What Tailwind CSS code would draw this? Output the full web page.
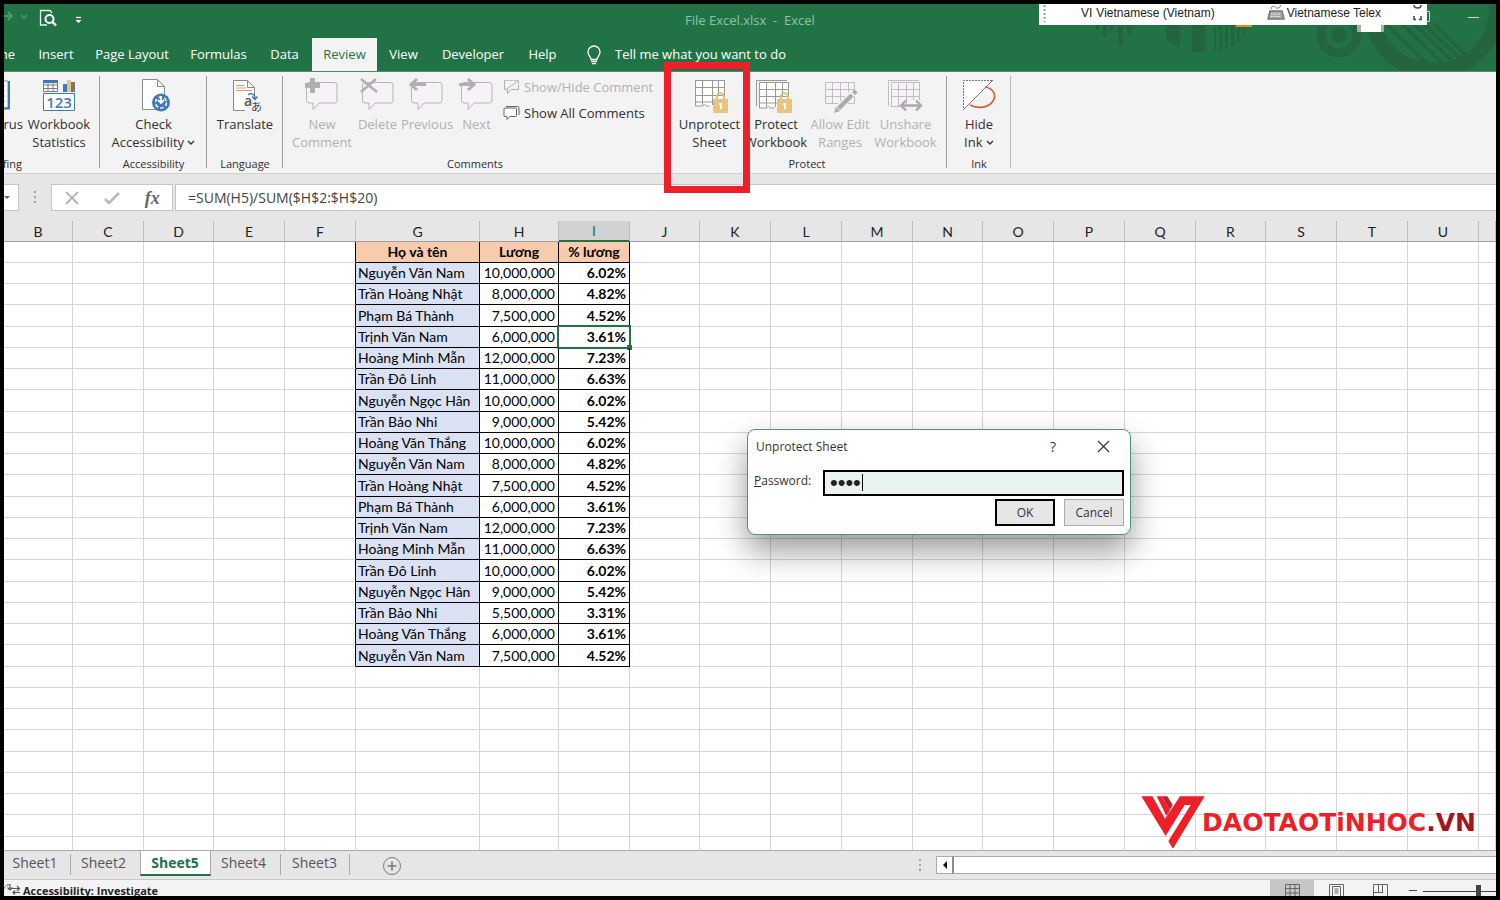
<!DOCTYPE html>
<html lang="vi">
<head>
<meta charset="utf-8">
<title>File Excel.xlsx - Excel</title>
<script src="https://cdn.jsdelivr.net/npm/@tailwindcss/browser@4"></script>
</head>
<body>
<div class="relative flex h-screen flex-col overflow-hidden border-4 border-black bg-[#e6e6e6] font-['Open_Sans','Noto_Sans',sans-serif] text-[13px] text-[#262626]">

  <!-- Title bar and ribbon tabs -->
  <header class="relative flex h-[68px] shrink-0 flex-col overflow-hidden border-b border-[#4c8e69] bg-[#217346] text-white">
    <svg class="absolute top-0 right-0" width="410" height="68" viewBox="0 0 410 68" fill="#24653f">
      <path d="M10 20h3v6h-3zM17 20h4v13h-4zM24 20h3v7h-3zM32 20h5v22h-5zM41 20h5v10h-5zM80 20h14v24l-14-8zM106 20h13v28h-13zM128 20h2v27h-2zM133 20h3v26h-3zM139 20h3v24h-3zM145 20h3v22h-3zM151 20h3v18h-3zM157 20h2v12h-2z"/>
      <circle cx="253" cy="31" r="18" fill="none" stroke="#24653f" stroke-width="9"/><circle cx="253" cy="31" r="8"/>
      <clipPath id="disc"><circle cx="348" cy="4" r="56"/></clipPath>
      <circle cx="348" cy="4" r="63" fill="none" stroke="#24653f" stroke-width="16"/>
      <path clip-path="url(#disc)" d="M300 20l50 48M316 20l50 48M328 20l50 48M338 20l50 48M348 20l50 48" fill="none" stroke="#24653f" stroke-width="4"/>
    </svg>
    <div class="relative grid h-[34px] grid-cols-[1fr_auto_1fr] items-center">
      <div class="flex h-full items-center">
        <svg width="90" height="34" viewBox="0 0 90 34" fill="none">
          <path d="M-4 12H8M4 8l4 4-4 4" stroke="#4f9a70" stroke-width="2"/>
          <path d="M17 11l3 3 3-3" stroke="#4f9a70" stroke-width="1.3"/>
          <path d="M43 21H36.500V6.500H46L48 9" stroke="#e8f2ec" stroke-width="1.300"/>
          <circle cx="45.500" cy="15" r="4" stroke="#fff" stroke-width="2"/><path d="M48.500 18l3.500 3.500" stroke="#fff" stroke-width="2.400"/>
          <path d="M72 13.500h5" stroke="#fff" stroke-width="1.300"/><path d="M71.500 16h6l-3 3z" fill="#fff"/>
        </svg>
      </div>
      <h1 class="pb-[3px] text-[13px] leading-4 whitespace-pre text-[#8fc3a6]">File Excel.xlsx  -  Excel</h1>
      <div class="flex justify-end pb-2">
        <button aria-label="Minimize" class="mr-[17px] h-3 w-[11px]"><span class="block h-px bg-[#c5dccf]"></span></button>
      </div>
    </div>
    <nav class="relative flex h-[34px] text-[13px]">
      <button class="flex w-6 items-center justify-end overflow-hidden pr-[13px]">Home</button>
      <button class="w-14">Insert</button>
      <button class="w-24">Page Layout</button>
      <button class="w-[77px]">Formulas</button>
      <button class="w-[55px]">Data</button>
      <button class="w-[65px] bg-[#f3f3f3] text-[#217346]">Review</button>
      <button class="w-[53px]">View</button>
      <button class="w-[86px]">Developer</button>
      <button class="w-[53px]">Help</button>
      <button class="ml-4 flex items-center gap-3">
        <svg width="18" height="20" viewBox="0 0 18 20" fill="none" stroke="#fff" stroke-width="1.300"><path d="M6 14.500c0-3-3-3.500-3-7.500a6 6 0 0 1 12 0c0 4-3 4.500-3 7.500zM6 16.500h6M7 18.700h4"/></svg>
        Tell me what you want to do
      </button>
    </nav>
  </header>

  <!-- Ribbon -->
  <section class="flex h-[102px] shrink-0 border-b border-[#d2d2d2] bg-[#f3f3f3] pt-1 pb-px text-center leading-[18px] text-[#303030]">
    <div class="relative flex w-24 flex-col justify-between">
      <div class="flex">
        <button class="flex w-[19px] flex-col items-end overflow-hidden">
          <svg width="19" height="39" viewBox="0 0 19 39" fill="none"><path d="M-2 5H4V32H-2" fill="#fff" stroke="#8a8a8a"/><path d="M-2 10H1M-2 15H1M-2 20H1M-2 25H1" stroke="#8a8a8a"/><path d="M5 5V32.500H-2" stroke="#3b78b8" stroke-width="2"/></svg>
          <span>Thesaurus</span>
        </button>
        <button class="flex w-[72px] flex-col items-center">
          <svg width="36" height="39" viewBox="0 0 36 39" fill="none">
            <path d="M2.500 4.500h14v11h-14zM2.500 9h14M2.500 12.500h14M7 6v10M12 6v10" stroke="#7d7d7d" fill="#fff"/><path d="M2 4h15v3H2z" fill="#3f7ab8"/>
            <path d="M22 8h4v8h-4z" fill="#3f7ab8"/><path d="M26 4h4v12h-4z" fill="#eac282"/><path d="M30 6h4v10h-4z" fill="#777"/>
            <path d="M2.500 17.500h31v17h-31z" fill="#fff" stroke="#3f7ab8"/>
            <text x="18" y="31.500" text-anchor="middle" font-family="Open Sans" font-size="15" font-weight="600" fill="#3f7ab8">123</text>
          </svg>
          <span>Workbook<br>Statistics</span>
        </button>
      </div>
      <div class="flex w-[18px] justify-end overflow-hidden text-[11px] leading-4">Proofing</div>
      <span class="absolute inset-y-0 right-0 mb-1 w-px bg-[#9c9c9c]"></span>
    </div>
    <div class="relative flex w-[107px] flex-col justify-between">
      <button class="flex flex-col items-center">
        <svg width="40" height="39" viewBox="0 0 40 39" fill="none">
          <path d="M8.500 3.500h15l7 7v23h-22zM23.500 3.500v7h7" fill="#fff" stroke="#8a8a8a"/>
          <circle cx="27" cy="26.500" r="9" fill="#3f7ab8"/><circle cx="27" cy="26.500" r="5.500" stroke="#fff" stroke-width="1.600" stroke-dasharray="3.500 2.200"/><path d="M27 20v6M24 24l3 3 3-3" stroke="#fff" stroke-width="1.800"/>
        </svg>
        <span>Check<br>Accessibility <svg class="inline" width="8" height="8" viewBox="0 0 8 8" fill="none" stroke="#333" stroke-width="1.400"><path d="M1 1l3 3 3-3"/></svg></span>
      </button>
      <div class="text-[11px] leading-4">Accessibility</div>
      <span class="absolute inset-y-0 right-0 mb-1 w-px bg-[#9c9c9c]"></span>
    </div>
    <div class="relative flex w-[76px] flex-col justify-between">
      <button class="flex flex-col items-center">
        <svg width="40" height="39" viewBox="0 0 40 39" fill="none">
          <path d="M8.500 4.500h14l7 7v23h-21zM22.500 4.500v7h7" fill="#fff" stroke="#8a8a8a"/>
          <path d="M11 9.500h8M11 12h10M11 14.500h16" stroke="#e59a5c" stroke-width="1.200"/><path d="M20 23h17v13H20z" fill="#f3f3f3"/>
          <path d="M23 19c3-2.500 7-1 7 3M27 20.500l3 3 2.500-3" stroke="#3f7ab8" stroke-width="1.400"/>
          <text x="19" y="30" font-family="Open Sans" font-size="14" font-weight="600" fill="#555">a</text>
          <text x="26" y="35" font-family="Noto Sans CJK JP" font-size="11" fill="#444">あ</text>
        </svg>
        <span>Translate</span>
      </button>
      <div class="text-[11px] leading-4">Language</div>
      <span class="absolute inset-y-0 right-0 mb-1 w-px bg-[#9c9c9c]"></span>
    </div>
    <div class="flex w-[384px] flex-col justify-between">
      <div class="flex pl-[7px] text-[#b1b1b1]">
        <button disabled class="flex w-16 flex-col items-center">
          <svg width="38" height="39" viewBox="2 0 38 39" fill="none"><path d="M5.500 9q0-2.500 2.500-2.500h25.500q2.500 0 2.500 2.500v15.500q0 2.500-2.500 2.500H18l-6 6.500V27H8q-2.500 0-2.500-2.500z" fill="#f6f2f8" stroke="#b5b5b5"/><path d="M11.500 2v15M4 9.500h15" stroke="#b0b0b0" stroke-width="5"/></svg>
          <span>New<br>Comment</span>
        </button>
        <button disabled class="flex w-[47px] flex-col items-center">
          <svg width="38" height="39" viewBox="2 0 38 39" fill="none"><path d="M5.500 9q0-2.500 2.500-2.500h25.500q2.500 0 2.500 2.500v15.500q0 2.500-2.500 2.500H18l-6 6.500V27H8q-2.500 0-2.500-2.500z" fill="#f6f2f8" stroke="#b5b5b5"/><path d="M4 3l16 13M19 3L4 16" stroke="#b0b0b0" stroke-width="2.600"/></svg>
          <span>Delete</span>
        </button>
        <button disabled class="flex w-[52px] flex-col items-center">
          <svg width="38" height="39" viewBox="2 0 38 39" fill="none"><path d="M5.500 9q0-2.500 2.500-2.500h25.500q2.500 0 2.500 2.500v15.500q0 2.500-2.500 2.500H18l-6 6.500V27H8q-2.500 0-2.500-2.500z" fill="#f6f2f8" stroke="#b5b5b5"/><path d="M20 8.500H5M11 3L5 8.500l6 5.500" stroke="#b0b0b0" stroke-width="3"/></svg>
          <span>Previous</span>
        </button>
        <button disabled class="flex w-[47px] flex-col items-center">
          <svg width="38" height="39" viewBox="2 0 38 39" fill="none"><path d="M5.500 9q0-2.500 2.500-2.500h25.500q2.500 0 2.500 2.500v15.500q0 2.500-2.500 2.500H18l-6 6.500V27H8q-2.500 0-2.500-2.500z" fill="#f6f2f8" stroke="#b5b5b5"/><path d="M3 8.500h15M12 3l6 5.500-6 5.500" stroke="#b0b0b0" stroke-width="3"/></svg>
          <span>Next</span>
        </button>
        <div class="flex flex-col gap-2 pt-[2px] pl-[3px]">
          <button disabled class="flex items-center gap-1">
            <svg width="17" height="18" viewBox="0 0 17 18" fill="none" stroke="#b1b1b1"><path d="M1.500 2.500h14v9" stroke-dasharray="2 1"/><path d="M1.500 2.500v9h3v4l3.500-4h7.500v-5M3 11.500L15 3" /></svg>
            Show/Hide Comment
          </button>
          <button class="flex items-center gap-1 text-[#303030]">
            <svg width="17" height="18" viewBox="0 0 17 18" fill="none" stroke="#666"><path d="M3 2.500h11.500q1.500 0 1.500 1.500v7" /><path d="M2 4h10.500q1 0 1 1v6.500q0 1-1 1H7L4 15.500v-3H2q-1 0-1-1V5q0-1 1-1z" fill="#fff"/></svg>
            Show All Comments
          </button>
        </div>
      </div>
      <div class="text-[11px] leading-4">Comments</div>
    </div>
    <div class="relative flex w-[280px] flex-col justify-between">
      <div class="flex pl-[9px]">
        <button class="flex w-[67px] flex-col items-center">
          <svg width="40" height="39" viewBox="0 0 40 39" fill="none"><path d="M5.500 4.500h29v25h-8q-4 2-7-1-3 3-6 0l-2 1h-6z" fill="#fff"/><path d="M5 4.500h30M5.500 4v26h7l2-1.500 2 1.500h3M34.500 4v16M12.500 4v25M22.500 4v25M28.500 4v16M5 11.500h30M5 19.500h30M5 26h20" stroke="#999"/><path d="M27 24v-3a3.500 4 0 0 1 7 0v3" stroke="#e9bd74" stroke-width="2.200"/><path d="M23 23h15v14H23z" fill="#eac282"/><path d="M29 27h3v6h-2v-4h-1z" fill="#fff"/></svg>
          <span>Unprotect<br>Sheet</span>
        </button>
        <button class="flex w-[66px] flex-col items-center">
          <svg width="40" height="39" viewBox="2 0 40 39" fill="none"><path d="M2.500 30V4.500H33" stroke="#999"/><path d="M5.500 6.500h29v24h-29z" fill="#fff"/><path d="M5 6.500h30M5.500 6v26h7l2-1.500 2 1.500h4M34.500 6v15M12.500 6v25M21.500 6v25M28.500 6v15M5 13.500h30M5 20.500h30M5 27h18" stroke="#999"/><path d="M27 24v-3a3.500 4 0 0 1 7 0v3" stroke="#e9bd74" stroke-width="2.200"/><path d="M23 23h15v14H23z" fill="#eac282"/><path d="M29 27h3v6h-2v-4h-1z" fill="#fff"/></svg>
          <span>Protect<br>Workbook</span>
        </button>
        <button disabled class="flex w-[62px] flex-col items-center text-[#b1b1b1]">
          <svg width="40" height="39" viewBox="0 0 40 39" fill="none"><path d="M5.500 6.500h29v21h-29z" fill="#f6f2f8"/><path d="M5.500 6.500h29v21h-29zM12.500 6v22M20.500 6v22M28.500 6v22M5 13.500h30M5 20.500h30" stroke="#c0bcc2"/><path d="M18 33L33 17" stroke="#f3f3f3" stroke-width="7"/><path d="M18.500 32.500L32 19M33.500 17.500L36 15" stroke="#ababab" stroke-width="4.500"/><path d="M14 37l2-6 4 4z" fill="#ababab"/></svg>
          <span>Allow Edit<br>Ranges</span>
        </button>
        <button disabled class="flex w-[69px] flex-col items-center text-[#b1b1b1]">
          <svg width="40" height="39" viewBox="1 0 40 39" fill="none"><path d="M3.500 30V4.500H34" stroke="#c0bcc2"/><path d="M6.500 6.500h28v24h-28z" fill="#f6f2f8"/><path d="M6.500 31V6.500h28v18M13.500 6v25M21.500 6v22M28.500 6v18M6 13.500h29M6 20.500h29M6 30.500h9" stroke="#c0bcc2"/><path d="M17 29.500h18M21 24.500l-5 5 5 5M31 24.500l5 5-5 5" stroke="#ababab" stroke-width="2.400"/></svg>
          <span>Unshare<br>Workbook</span>
        </button>
      </div>
      <div class="text-[11px] leading-4">Protect</div>
      <span class="absolute inset-y-0 right-0 mb-1 w-px bg-[#9c9c9c]"></span>
    </div>
    <div class="relative flex w-16 flex-col justify-between">
      <button class="flex flex-col items-center">
        <svg width="38" height="39" viewBox="1 0 38 39" fill="none"><path d="M4 4h30L4 34z" fill="#fff"/><path d="M33 4.500H4.500V34" stroke="#777" stroke-dasharray="2 1"/><path d="M26 11c8 1 12 8 8 14-4 7-16 8-23 4" stroke="#d9593a" stroke-width="1.600"/><path d="M34 4L4 34" stroke="#777"/></svg>
        <span>Hide<br>Ink <svg class="inline" width="8" height="8" viewBox="0 0 8 8" fill="none" stroke="#333" stroke-width="1.400"><path d="M1 1l3 3 3-3"/></svg></span>
      </button>
      <div class="text-[11px] leading-4">Ink</div>
      <span class="absolute inset-y-0 right-0 mb-1 w-px bg-[#b8b8b8]"></span>
    </div>
  </section>

  <!-- Formula bar -->
  <section class="flex h-[47px] shrink-0 items-start pt-[10px]">
    <button aria-label="Name box list" class="flex h-[27px] w-[15px] items-center border border-l-0 border-[#c6c6c6] bg-white"><svg width="10" height="6" viewBox="0 0 10 6"><path d="M0 1h6L3 4z" fill="#666"/></svg></button>
    <svg class="ml-3" width="8" height="27" viewBox="0 0 8 27" fill="#a0a0a0"><path d="M3 7h2v2H3zM3 12h2v2H3zM3 17h2v2H3z"/></svg>
    <div class="ml-3 flex h-[27px] w-[122px] items-center justify-around border border-[#c6c6c6] bg-white">
      <button aria-label="Cancel entry"><svg width="16" height="16" viewBox="0 0 16 16" fill="none" stroke="#b5b5b5" stroke-width="1.800"><path d="M2 2l12 12M14 2L2 14"/></svg></button>
      <button aria-label="Enter"><svg width="16" height="16" viewBox="0 0 16 16" fill="none" stroke="#b8b8b8" stroke-width="2.600"><path d="M1 9l4 4L15 3"/></svg></button>
      <button aria-label="Insert function" class="font-['Liberation_Serif',serif] text-[18px] leading-5 font-bold text-[#666] italic">fx</button>
    </div>
    <input aria-label="Formula" value="=SUM(H5)/SUM($H$2:$H$20)" class="ml-[2px] h-[27px] min-w-0 flex-1 border border-r-0 border-[#c6c6c6] bg-white pl-3 text-sm text-[#444] outline-none">
  </section>

  <!-- Worksheet -->
  <main class="min-h-0 flex-1 overflow-hidden bg-white font-['Lato','Noto_Sans',sans-serif] text-sm text-black">
    <table class="w-full table-fixed border-separate border-spacing-0">
      <colgroup id="cols"></colgroup>
      <thead><tr id="letters"></tr></thead>
      <tbody id="rows"></tbody>
    </table>
  </main>

  <!-- Sheet tabs -->
  <footer class="shrink-0">
    <div class="flex h-[29px] items-start border-t border-[#ababab] bg-[#e6e6e6] text-sm text-[#555]">
      <button class="mt-[3px] h-[21px] w-[67px] border-r border-[#ababab] pr-1 pb-1 leading-[17px]">Sheet1</button>
      <button class="mt-[3px] h-[21px] w-[69px] pr-1 pb-1 leading-[17px]">Sheet2</button>
      <button class="h-[25px] w-[71px] border-x border-b-2 border-x-[#ababab] border-b-[#217346] bg-white pr-px leading-[23px] font-bold text-[#217346]">Sheet5</button>
      <button class="mt-[3px] h-[21px] w-[70px] border-r border-[#ababab] pr-1 pb-1 leading-[17px]">Sheet4</button>
      <button class="mt-[3px] h-[21px] w-[69px] border-r border-[#ababab] pr-px pb-1 leading-[17px]">Sheet3</button>
      <button aria-label="New sheet" class="mt-[5px] ml-8"><svg width="20" height="20" viewBox="0 0 20 20" fill="none" stroke="#777"><circle cx="10" cy="10" r="8.500"/><path d="M10 5.500v9M5.500 10h9" stroke-width="1.600"/></svg></button>
      <div class="mt-[5px] ml-auto flex h-[18px] w-[580px]">
        <svg width="20" height="18" viewBox="0 0 20 18" fill="#a0a0a0"><path d="M3 3h2v2H3zM3 8h2v2H3zM3 13h2v2H3z"/></svg>
        <button aria-label="Scroll left" class="flex h-[18px] w-4 items-center justify-center border border-r-0 border-[#ababab] bg-white"><svg width="6" height="8" viewBox="0 0 6 8"><path d="M5 0v8L1 4z" fill="#111"/></svg></button>
        <div class="h-[18px] flex-1 border-y border-l-2 border-[#ababab] border-l-[#8c8c8c] bg-white"></div>
      </div>
    </div>
    <div class="flex h-[17px] items-start overflow-hidden border-t border-[#c9c9c9] bg-[#f3f3f3]">
      <svg width="18" height="17" viewBox="0 0 18 17" fill="none" stroke="#555"><path d="M5 4.500C2 5-1 8-.5 12" stroke-dasharray="3 1"/><path d="M6 4v6M3.500 7.500L6 10l2.500-2.500M8 8.500h7M13 6l2.500 2.500L13 11M16 12.500H9M11 10.500l-2 2 2 2" stroke-width="1.200"/></svg>
      <span class="pt-[3px] pl-px text-[11px] leading-4 font-bold">Accessibility: Investigate</span>
      <div class="ml-auto flex">
        <button aria-label="Normal view" class="flex h-4 w-11 justify-center bg-[#c6c6c6] pt-1"><svg width="15" height="12" viewBox="0 0 15 12" fill="none" stroke="#666"><path d="M.5.500h14v13H.500zM5 0v12M10 0v12M0 4.500h15M0 9h15"/></svg></button>
        <button aria-label="Page layout view" class="flex h-4 w-11 justify-center pt-1"><svg width="15" height="12" viewBox="0 0 15 12" fill="none" stroke="#666"><path d="M.5.500h14v13H.500zM3.500 2.500h8V12M3.500 2.500V12M5.500 5h4M5.500 7h4M5.500 9h4"/></svg></button>
        <button aria-label="Page break view" class="flex h-4 w-11 justify-center pt-1"><svg width="15" height="12" viewBox="0 0 15 12" fill="none" stroke="#666"><path d="M.5 12V.500h14V12M.5 8.500h9M5.500 0v8M9.500 0v9"/></svg></button>
        <svg width="94" height="17" viewBox="0 0 94 17"><path d="M7 10h8v1H7zM21 11h73v1H21z" fill="#444"/><path d="M74 5h5v12h-5z" fill="#444"/></svg>
      </div>
    </div>
  </footer>

  <!-- Language bar -->
  <div class="absolute top-0 right-[69px] flex h-[21px] w-[388px] items-center bg-white pb-1 font-['Liberation_Sans',sans-serif] text-xs text-[#222]">
    <svg width="10" height="18" viewBox="0 0 10 18"><path d="M5.500 1v17" stroke="#999" stroke-width="2" stroke-dasharray="2 2"/></svg>
    <span class="ml-8">VI</span><span class="ml-1 whitespace-nowrap">Vietnamese (Vietnam)</span>
    <svg class="ml-auto" width="18" height="17" viewBox="0 0 18 17" fill="none" stroke="#777"><path d="M4 5c1-4 4-3 5-1.500S13 4 14 1"/><path d="M3 7h12l2 8H1z" fill="#aaa" stroke-width="1.500"/><path d="M4 10h10M4 12.500h10" stroke="#eee" stroke-dasharray="1.500 1"/></svg>
    <span class="ml-[2px] whitespace-nowrap">Vietnamese Telex</span>
    <svg class="mr-[5px] ml-8" width="9" height="17" viewBox="0 0 9 17" fill="none" stroke="#444" stroke-width="1.500"><path d="M1 1c0 4 7 4 7 0"/><path d="M1 12v3.500h2M6 15.500h2V12"/></svg>
  </div>
  <svg class="absolute top-[21px] right-[110px]" width="150" height="8" viewBox="0 0 150 8"><path d="M0 0h16v2H0z" fill="#e08a30"/><path d="M121 0h27v7h-27z" fill="#aaa"/><path d="M125 0h20v7h-20z" fill="#fff"/></svg>
  <svg class="absolute top-[7px] right-[66px]" width="3" height="12" viewBox="0 0 3 12" fill="none" stroke="#c5dccf"><path d="M0 .5h2.500v10H0"/></svg>

  <!-- Highlight frame -->
  <div class="absolute top-[58px] left-[660px] h-[131px] w-[86px] border-[7px] border-[#ed1f29]"></div>

  <!-- Dialog -->
  <form role="dialog" aria-labelledby="dlg-title" class="absolute top-[425px] left-[743px] flex w-96 flex-col rounded-lg border border-[#4d9670] bg-white px-[6px] pb-2 text-xs text-[#333] shadow-[0_16px_32px_rgba(0,0,0,0.4)]">
    <div class="flex h-[34px] items-center">
      <h2 id="dlg-title" class="flex-1 pl-[2px]">Unprotect Sheet</h2>
      <button type="button" aria-label="Help" class="w-8 text-sm">?</button>
      <button type="button" aria-label="Close" class="mr-[14px] ml-7 pb-[2px]"><svg width="13" height="13" viewBox="0 0 13 13" fill="none" stroke="#333" stroke-width="1.200"><path d="M1 1l11 11M12 1L1 12"/></svg></button>
    </div>
    <div class="relative mt-[6px] flex items-start">
      <label for="pw" class="w-[69px] leading-[22px]"><u>P</u>assword:</label>
      <input id="pw" type="password" value="1234" class="h-[26px] min-w-0 flex-1 border-2 border-black bg-[#eaf3ee] pl-[5px] font-['Liberation_Sans',sans-serif] text-[22px] text-[#222] outline-none">
      <span class="absolute top-[4px] left-[108px] h-[17px] w-px bg-black"></span>
    </div>
    <div class="mt-[3px] flex justify-end gap-[9px]">
      <button class="h-[27px] w-[60px] border-2 border-black bg-[#e6e6e6]">OK</button>
      <button type="button" class="h-[27px] w-[60px] border border-[#adadad] bg-[#e6e6e6]">Cancel</button>
    </div>
  </form>

  <!-- Site watermark -->
  <div class="absolute right-[20px] bottom-[46px] flex items-center">
    <svg width="64" height="54" viewBox="26 35 192 162"><path d="M73 36h16l24 43-11 15z" fill="#ed1f29"/><path d="M89 36h16l16 26-9 16z" fill="#c5202a"/><path d="M27 36h33l38 67 45-67h74l-95 157-14-22 67-109h-18l-57 93z" fill="#ed1f29"/></svg>
    <span class="-ml-[3px] font-['DejaVu_Sans',sans-serif] text-[25px] leading-6 font-bold text-[#ed1f29]">DAOTAOTiNHOC<span class="text-[#a3151d]">.VN</span></span>
  </div>
</div>

<script>
const widths = [69,71,70,71,71,124,79,71,70,71,71,71,70,71,71,71,70,71,71,71,0];
const letters = 'BCDEFGHIJKLMNOPQRSTU'.split('');
const names = ['Nguyễn Văn Nam','Trần Hoàng Nhật','Phạm Bá Thành','Trịnh Văn Nam','Hoàng Minh Mẫn','Trần Đô Linh','Nguyễn Ngọc Hân','Trần Bảo Nhi','Hoàng Văn Thắng'];
const pay = ['10,000,000','8,000,000','7,500,000','6,000,000','12,000,000','11,000,000','10,000,000','9,000,000','10,000,000','8,000,000','7,500,000','6,000,000','12,000,000','11,000,000','10,000,000','9,000,000','5,500,000','6,000,000','7,500,000'];
const share = ['6.02%','4.82%','4.52%','3.61%','7.23%','6.63%','6.02%','5.42%','6.02%','4.82%','4.52%','3.61%','7.23%','6.63%','6.02%','5.42%','3.31%','3.61%','4.52%'];
document.getElementById('cols').innerHTML = widths.map(w => w ? `<col style="width:${w}px">` : '<col>').join('');
document.getElementById('letters').innerHTML = letters.concat('').map(l =>
  l === 'I' ? '<th class="h-[21px] border-r border-b-2 border-r-[#bdbdbd] border-b-[#217346] bg-[#d2d2d2] p-0 leading-[18px] font-normal text-[#217346]">I</th>'
            : `<th class="h-[21px] border-r border-b border-r-[#bdbdbd] border-b-[#9f9f9f] bg-[#e6e6e6] p-0 leading-[19px] font-normal text-[#222]">${l}</th>`).join('');
let html = '';
for (let r = 0; r < 29; r++) {
  html += r % 4 === 3 ? '<tr class="h-[22px]">' : '<tr class="h-[21px]">';
  for (let c = 0; c < 21; c++) {
    if (r < 20 && c === 4) html += '<td class="border-r border-b border-r-black border-b-[#d6d6d6] p-0"></td>';
    else if (r === 0 && c > 4 && c < 8) html += `<th class="border-r border-b border-black bg-[#f8cbad] p-0 leading-[18px] font-bold">${['Họ và tên','Lương','% lương'][c-5]}</th>`;
    else if (r < 20 && c === 5) html += `<td class="border-r border-b border-black bg-[#d9e1f2] p-0 pl-[2px] leading-[18px] whitespace-nowrap">${names[(r-1)%9]}</td>`;
    else if (r < 20 && c === 6) html += `<td class="border-r border-b border-black p-0 pr-[3px] text-right leading-[18px]">${pay[r-1]}</td>`;
    else if (r < 20 && c === 7) html += `<td class="relative border-r border-b border-black p-0 pr-[3px] text-right leading-[18px] font-bold">${share[r-1]}${r === 4 ? '<span class="absolute -inset-x-[2px] -inset-y-[2px] border-2 border-[#217346]"></span><span class="absolute -right-[3px] -bottom-[3px] h-[5px] w-[5px] bg-[#217346]"></span>' : ''}</td>`;
    else html += '<td class="border-r border-b border-[#d6d6d6] p-0"></td>';
  }
  html += '</tr>';
}
document.getElementById('rows').innerHTML = html;
</script>
</body>
</html>
